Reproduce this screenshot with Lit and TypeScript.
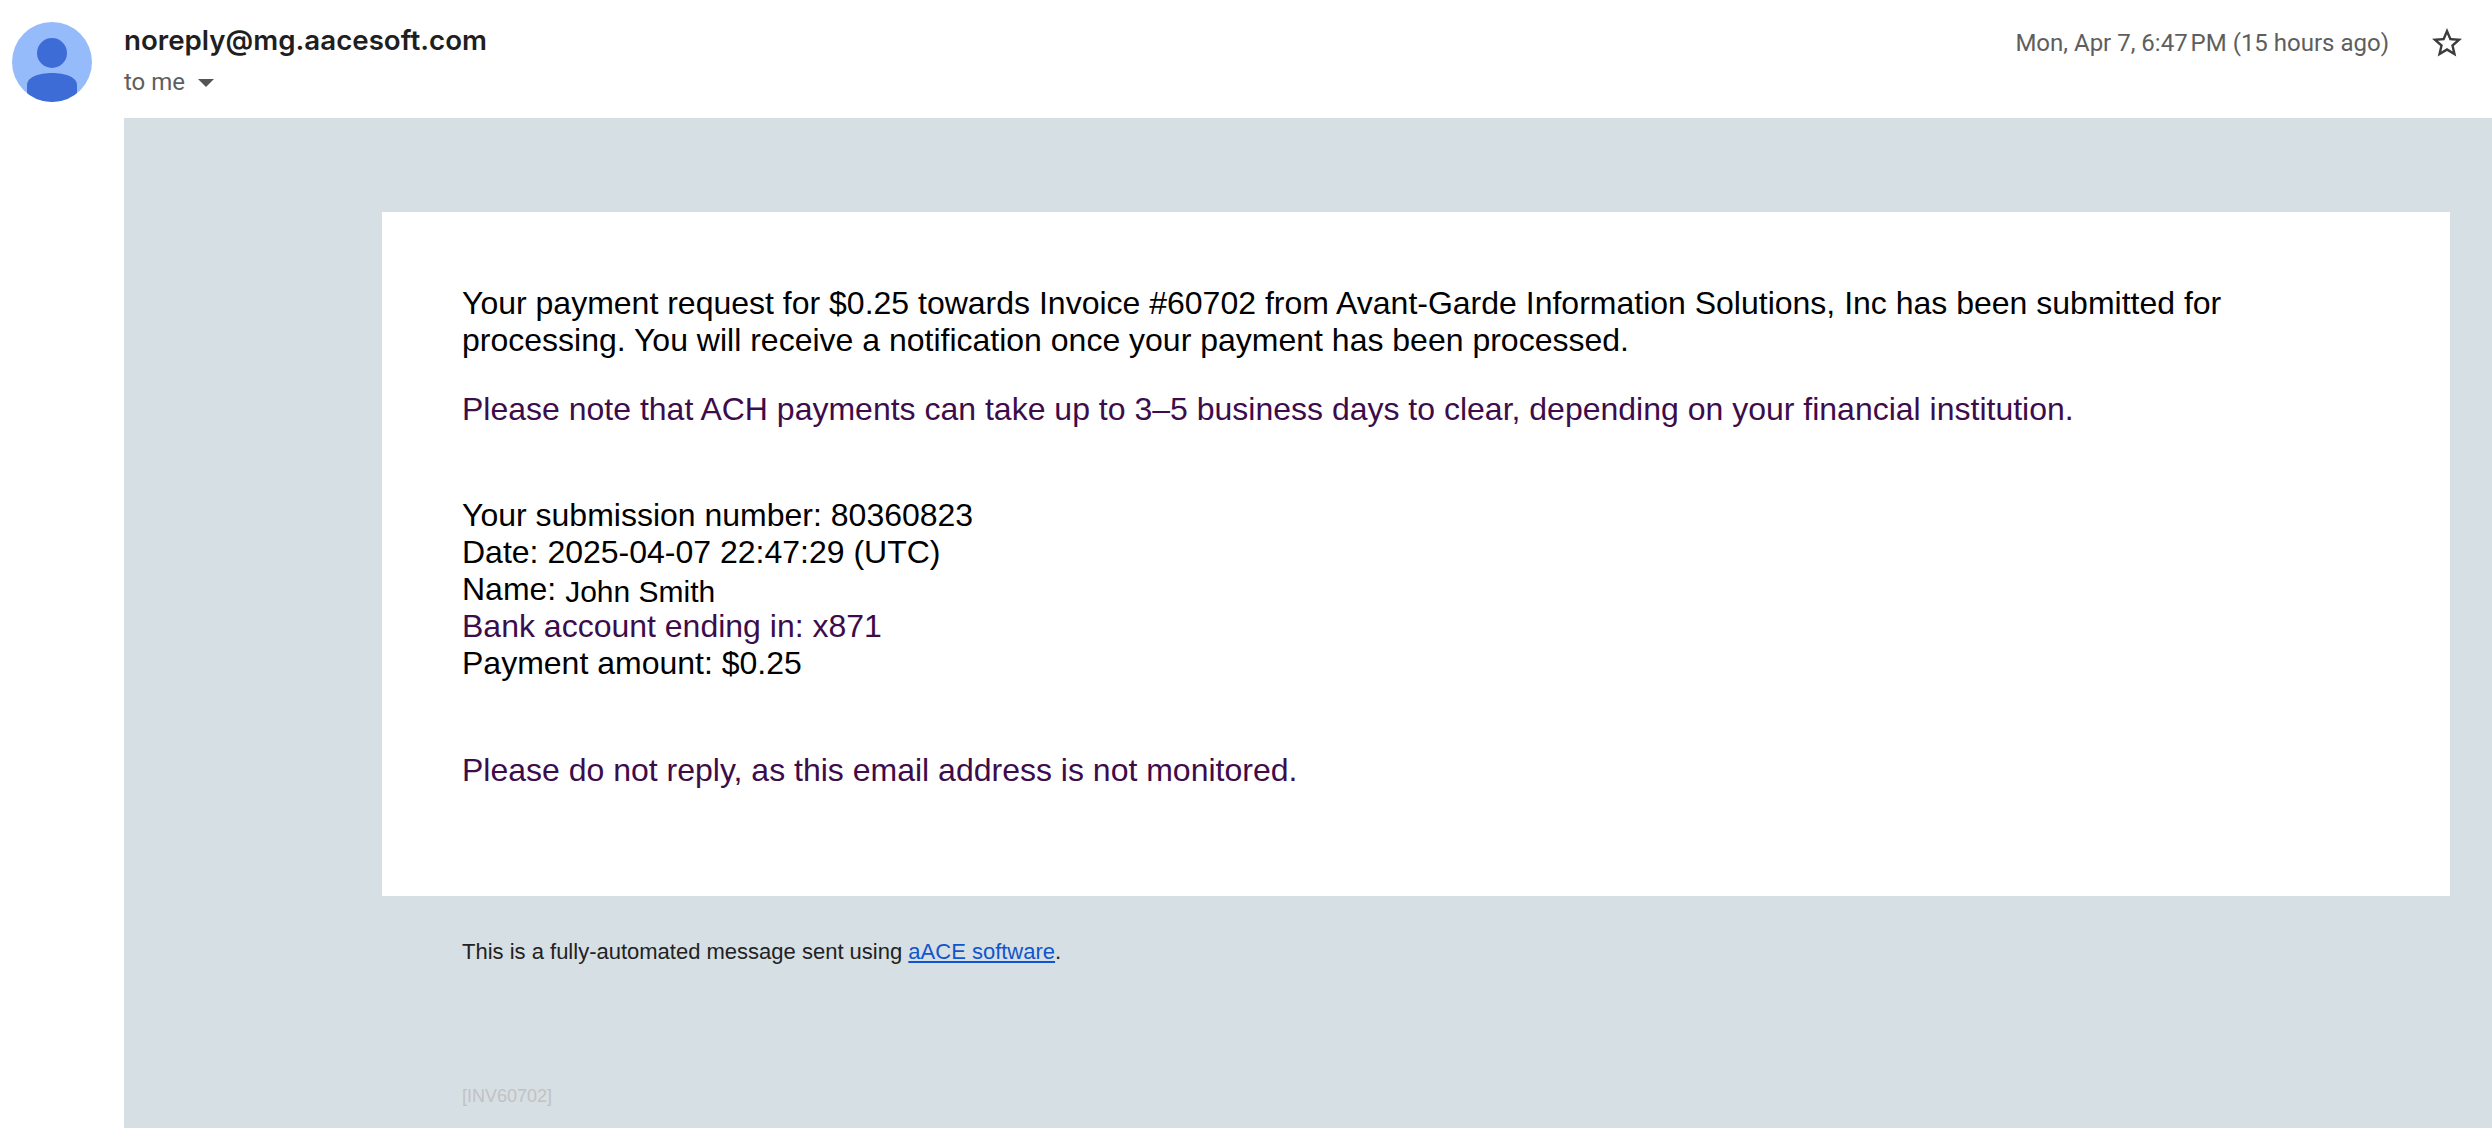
import { LitElement, html, css } from "lit";
import { customElement } from "lit/decorators.js";

@customElement("app-root")
export class AppRoot extends LitElement {
  static styles = css`
    :host { display: block; width: 2492px; height: 1128px; overflow: hidden; background: #fff; font-family: "Liberation Sans", Arial, sans-serif; }
    .page { display: grid; grid-template-columns: 124px 1fr; height: 1128px; }
    .avatar-col { padding: 22px 0 0 12px; }
    .avatar { display: block; width: 80px; height: 80px; }
    .main { display: flex; flex-direction: column; min-width: 0; }
    .head { height: 118px; flex: none; display: flex; justify-content: space-between; align-items: flex-start; padding-right: 27px; box-sizing: border-box; }
    .sender { font-family: Inter, sans-serif; font-weight: 600; font-size: 27.7px; line-height: 32px; color: #1f1f1f; margin-top: 24px; white-space: nowrap; }
    .to { display: flex; align-items: center; gap: 13px; font-family: Roboto, sans-serif; font-size: 24px; line-height: 28px; color: #5e5e5e; margin-top: 12px; }
    .caret { width: 0; height: 0; border-left: 8px solid transparent; border-right: 8px solid transparent; border-top: 8px solid #555; margin-top: 2px; }
    .right { display: flex; align-items: center; gap: 40px; margin-top: 25px; }
    .date { font-family: Roboto, sans-serif; font-size: 24px; line-height: 32px; color: #5e5e5e; white-space: nowrap; }
    .star { display: block; width: 36px; height: 36px; }
    .body { flex: 1; background: #d6dfe4; padding: 94px 42px 0 258px; min-height: 0; }
    .card { background: #fff; height: 684px; box-sizing: border-box; padding: 73px 80px 0; font-size: 32px; line-height: 37px; color: #000; }
    .card p { margin: 0; }
    .purple { color: #3d0c4a; }
    .note { margin-top: 32px !important; }
    .details { margin-top: 69px !important; }
    .name { font-size: 30px; line-height: 30px; vertical-align: -2px; }
    .noreply { margin-top: 70px !important; }
    .foot { padding: 43px 0 0 80px; font-size: 22px; line-height: 26px; color: #222; }
    .foot a { color: #1155cc; text-decoration: underline; }
    .ref { margin-top: 120px; font-size: 18px; line-height: 22px; color: #c2c2c2; }
  `;

  render() {
    return html`
      <div class="page">
        <div class="avatar-col">
          <svg class="avatar" viewBox="0 0 80 80">
            <defs><clipPath id="c"><circle cx="40" cy="40" r="40"></circle></clipPath></defs>
            <circle cx="40" cy="40" r="40" fill="#96bbfb"></circle>
            <g clip-path="url(#c)" fill="#3d6cd6">
              <circle cx="40" cy="31" r="15"></circle>
              <path d="M15 80V63C15 55 27 51 40 51S65 55 65 63V80Z"></path>
            </g>
          </svg>
        </div>
        <div class="main">
          <div class="head">
            <div>
              <div class="sender">noreply@mg.aacesoft.com</div>
              <div class="to">to me <span class="caret"></span></div>
            </div>
            <div class="right">
              <span class="date">Mon, Apr 7, 6:47\u202fPM (15 hours ago)</span>
              <svg class="star" viewBox="0 0 24 24" fill="#3c3c3c"><path d="M22 9.24l-7.19-.62L12 2 9.19 8.63 2 9.24l5.46 4.73L5.82 21 12 17.27 18.18 21l-1.63-7.03L22 9.24zM12 15.4l-3.76 2.27 1-4.28-3.32-2.88 4.38-.38L12 6.1l1.71 4.04 4.38.38-3.32 2.88 1 4.28L12 15.4z"></path></svg>
            </div>
          </div>
          <div class="body">
            <div class="card">
              <p>Your payment request for $0.25 towards Invoice #60702 from Avant-Garde Information Solutions, Inc has been submitted for processing. You will receive a notification once your payment has been processed.</p>
              <p class="purple note">Please note that ACH payments can take up to 3–5 business days to clear, depending on your financial institution.</p>
              <p class="details">
                Your submission number: 80360823<br />
                Date: 2025-04-07 22:47:29 (UTC)<br />
                Name: <span class="name">John Smith</span><br />
                <span class="purple">Bank account ending in: x871</span><br />
                Payment amount: $0.25
              </p>
              <p class="purple noreply">Please do not reply, as this email address is not monitored.</p>
            </div>
            <div class="foot">
              <div>This is a fully-automated message sent using <a href="#">aACE software</a>.</div>
              <div class="ref">[INV60702]</div>
            </div>
          </div>
        </div>
      </div>
    `;
  }
}
